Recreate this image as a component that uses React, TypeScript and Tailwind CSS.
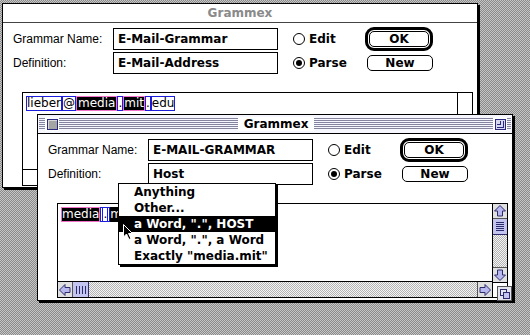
import React from 'react';

const CHICAGO = "font-['DejaVu_Sans',sans-serif] font-bold text-[12px] leading-[14px]";
const LABEL = "font-['Liberation_Sans',Arial,sans-serif] text-[12px] leading-[14px]";
const GENEVA = "font-['DejaVu_Sans',sans-serif] text-[12px] leading-[13px]";
const DITHER =
  'bg-[repeating-conic-gradient(#b4b4b4_0%_25%,#f4f4f4_0%_50%)] bg-[length:2px_2px]';

// the striped fill of an active title bar: 1px rules every other line
function Stripes({ className }: { className: string }) {
  return (
    <div className={`flex h-[14px] flex-col gap-[1px] pt-[1px] ${className}`}>
      {[0, 1, 2, 3, 4, 5].map((i) => (
        <div key={i} className="h-[1px] shrink-0 bg-[#84849e]" />
      ))}
    </div>
  );
}

function Radio({ label, checked }: { label: string; checked?: boolean }) {
  return (
    <div className="flex w-[72px] items-center gap-[4px]">
      <div className="flex h-[12px] w-[12px] items-center justify-center rounded-full border border-black bg-white">
        {checked && <div className="h-[6px] w-[6px] rounded-full bg-black" />}
      </div>
      <span className={CHICAGO}>{label}</span>
    </div>
  );
}

function Field({ value }: { value: string }) {
  return (
    <div className={`flex h-[22px] w-[165px] items-center border border-black pl-[4px] ${CHICAGO}`}>
      {value}
    </div>
  );
}

function ScrollArrow({ dir }: { dir: 'up' | 'down' | 'left' | 'right' }) {
  const rot = { up: 0, down: 180, left: 270, right: 90 }[dir];
  return (
    <svg width="14" height="14" viewBox="0 0 14 14">
      <polygon
        points="7,1.5 12.5,7 9.5,7 9.5,12 4.5,12 4.5,7 1.5,7"
        fill="#b8b8ee"
        stroke="#2c2c6c"
        strokeWidth="1"
        transform={`rotate(${rot} 7 7)`}
      />
    </svg>
  );
}

function TitleBar({ active }: { active: boolean }) {
  if (!active) {
    return (
      <div className="flex h-[19px] shrink-0 items-center justify-center border-b border-[#444]">
        <span className={`${CHICAGO} text-[#8a8a8a]`}>Grammex</span>
      </div>
    );
  }
  return (
    <div className="flex h-[19px] shrink-0 items-center border-b border-black bg-[#f6f6ff] px-[1px]">
      <Stripes className="w-[6px]" />
      <div className="flex h-[14px] w-[14px] items-center justify-center bg-white">
        <div className="h-[11px] w-[11px] border border-[#2a2a80] bg-[#a4a4a4] shadow-[inset_1px_1px_0_#d8d8d8]" />
      </div>
      <Stripes className="flex-1" />
      <span className={`shrink-0 bg-white px-[6px] ${CHICAGO}`}>Grammex</span>
      <Stripes className="flex-1" />
      <div className="flex h-[14px] w-[14px] items-center justify-center bg-white">
        <div className="relative h-[11px] w-[11px] border border-[#2a2a80] bg-[#d8d8ee]">
          <div className="absolute left-[1px] top-[1px] h-[7px] w-[7px] border-r border-b border-[#2a2a80]" />
          <div className="absolute left-[1px] top-[1px] h-[4px] w-[4px] border-r border-b border-[#2a2a80]" />
        </div>
      </div>
      <Stripes className="w-[4px]" />
    </div>
  );
}

function TextBox({
  active,
  boxH,
  children,
}: {
  active: boolean;
  boxH: string;
  children: React.ReactNode;
}) {
  return (
    <div className={`ml-[9px] mt-[18px] flex w-[451px] border border-black ${boxH}`}>
      <div className="flex flex-1 flex-col">
        <div className="flex-1 pl-[3px] pt-[3px]">{children}</div>
        <div className="flex h-[16px] border-t border-black">
          {active && (
            <>
              <div className="flex w-[15px] items-center justify-center border-r border-[#555] bg-[#e0e0e0]">
                <ScrollArrow dir="left" />
              </div>
              <div className="flex w-[16px] items-center justify-center gap-[2px] border-r border-[#2c2c6c] bg-[#c4c4f0]">
                {[0, 1, 2, 3].map((i) => (
                  <div key={i} className="h-[8px] w-[1px] bg-[#2c2c6c]" />
                ))}
              </div>
              <div className={`flex-1 ${DITHER}`} />
              <div className="flex w-[15px] items-center justify-center border-l border-[#555] bg-[#e0e0e0]">
                <ScrollArrow dir="right" />
              </div>
            </>
          )}
        </div>
      </div>
      <div className="flex w-[15px] flex-col border-l border-black">
        {active && (
          <>
            <div className="flex h-[15px] items-center justify-center border-b border-[#555] bg-[#e0e0e0]">
              <ScrollArrow dir="up" />
            </div>
            <div className="flex h-[16px] flex-col items-center justify-center gap-[1px] border-b border-[#2c2c6c] bg-[#c4c4f0]">
              {[0, 1, 2, 3, 4].map((i) => (
                <div key={i} className="h-[1px] w-[8px] bg-[#2c2c6c]" />
              ))}
            </div>
            <div className={`flex-1 ${DITHER}`} />
            <div className="flex h-[15px] items-center justify-center border-t border-[#555] bg-[#e0e0e0]">
              <ScrollArrow dir="down" />
            </div>
            <div className="h-[15px] border-t border-black" />
          </>
        )}
      </div>
    </div>
  );
}

function GrammexWindow({
  active,
  name,
  def,
  winH,
  boxH,
  children,
}: {
  active: boolean;
  name: string;
  def: string;
  winH: string;
  boxH: string;
  children: React.ReactNode;
}) {
  return (
    <div className={`flex w-[476px] flex-col border border-black bg-white shadow-[2px_2px_0_#000] ${winH}`}>
      <TitleBar active={active} />
      <div className="flex flex-col pl-[10px] pt-[5px]">
        <div className="flex h-[22px] items-center">
          <span className={`w-[100px] ${LABEL}`}>Grammar Name:</span>
          <Field value={name} />
          <div className="w-[15px]" />
          <Radio label="Edit" />
          <div className="h-[24px] w-[68px] rounded-[9px] border-[3px] border-black p-[1px]">
            <div className={`flex h-full items-center justify-center rounded-[5px] border border-black ${CHICAGO}`}>
              OK
            </div>
          </div>
        </div>
        <div className="mt-[2px] flex h-[22px] items-center">
          <span className={`w-[100px] ${LABEL}`}>Definition:</span>
          <Field value={def} />
          <div className="w-[15px]" />
          <Radio label="Parse" checked />
          <div className={`ml-[2px] flex h-[16px] w-[66px] items-center justify-center rounded-[5px] border border-black ${CHICAGO}`}>
            New
          </div>
        </div>
        <TextBox active={active} boxH={boxH}>
          {children}
        </TextBox>
      </div>
    </div>
  );
}

const BLUE = 'border border-[#1c1cdc]';
const PINK = 'border border-[#f070c8]';

function Tok({ cls, children }: { cls: string; children: React.ReactNode }) {
  return <span className={`inline-flex h-[15px] items-center ${cls}`}>{children}</span>;
}

const MENU = ['Anything', 'Other...', 'a Word, ".", HOST', 'a Word, ".", a Word', 'Exactly "media.mit"'];

export default function App() {
  return (
    <div className="relative h-[335px] w-[530px] overflow-hidden bg-[repeating-conic-gradient(#8a8a8a_0%_25%,#c6c6c6_0%_50%)] bg-[length:2px_2px]">
      <div className="absolute left-[2px] top-[3px]">
        <GrammexWindow active={false} name="E-Mail-Grammar" def="E-Mail-Address" winH="h-[185px]" boxH="h-[94px]">
          <div className={`flex ${GENEVA}`}>
            <Tok cls={BLUE}>lieber</Tok>
            <Tok cls={BLUE}>@</Tok>
            <Tok cls={PINK}>
              <span className="bg-black px-[1px] text-white">media</span>
            </Tok>
            <Tok cls={BLUE}>.</Tok>
            <Tok cls={`${PINK} bg-black text-white`}>mit</Tok>
            <Tok cls={BLUE}>.</Tok>
            <Tok cls={BLUE}>edu</Tok>
          </div>
        </GrammexWindow>
      </div>

      <div className="absolute left-[37px] top-[114px]">
        <GrammexWindow active name="E-MAIL-GRAMMAR" def="Host" winH="h-[187px]" boxH="h-[95px]">
          <div className={`flex ${GENEVA}`}>
            <Tok cls={`${PINK} bg-black text-white`}>media</Tok>
            <Tok cls={`${BLUE} px-[1px]`}>
              <span className="border-x border-[#1c1cdc]">.</span>
            </Tok>
            <Tok cls="bg-black text-white">mit</Tok>
          </div>
        </GrammexWindow>
      </div>

      {/* grow box */}
      <div className="absolute left-[497px] top-[286px] h-[15px] w-[15px] border border-[#555] bg-[#e4e4ec]">
        <div className="absolute left-[2px] top-[2px] h-[7px] w-[7px] border border-[#2c2c6c]" />
        <div className="absolute left-[5px] top-[5px] h-[7px] w-[7px] border border-[#2c2c6c] bg-[#c4c4f0]" />
      </div>

      {/* popup menu */}
      <div className="absolute left-[118px] top-[183px] w-[158px] border border-black bg-white shadow-[2px_2px_0_#000]">
        {MENU.map((item, i) => (
          <div
            key={item}
            className={`flex h-[16px] items-center pl-[15px] text-[11.5px] ${CHICAGO} ${
              i === 2 ? 'bg-black text-white' : 'text-black'
            }`}
          >
            {item}
          </div>
        ))}
      </div>

      {/* mouse pointer */}
      <svg className="absolute left-[123px] top-[224px]" width="12" height="17" viewBox="0 0 12 17">
        <polygon
          points="0.5,0.5 0.5,13 3.5,10 6,15.5 8,14.5 5.5,9.5 9.5,9.5"
          fill="#000"
          stroke="#fff"
          strokeWidth="1"
        />
      </svg>
    </div>
  );
}
